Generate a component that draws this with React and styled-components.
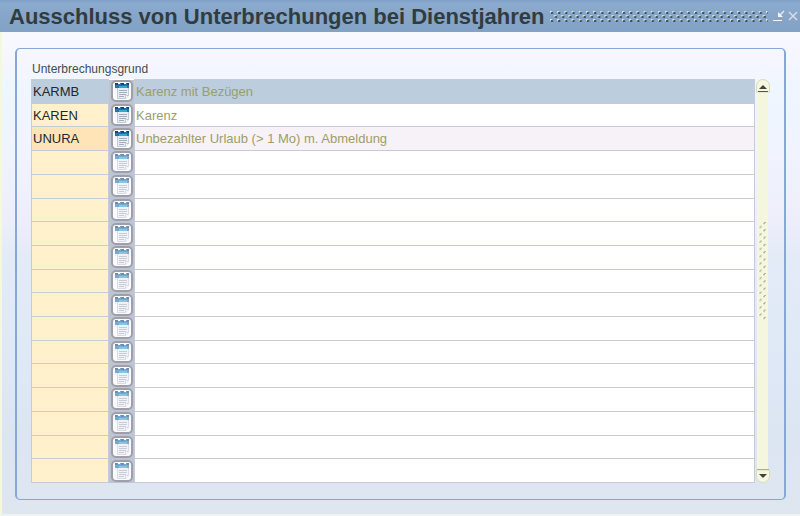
import React, { useState } from "react";
import styled, { createGlobalStyle } from "styled-components";

const GlobalStyle = createGlobalStyle`
    * {
        box-sizing: border-box;
    }
    body {
        margin: 0;
        font-family: "Liberation Sans", Arial, sans-serif;
    }
`;

const Window = styled.div`
    display: flex;
    flex-direction: column;
    min-height: 100vh;
    border-left: 2px solid #f4f8dc;
    border-bottom: 2px solid #eef2f0;
    background: linear-gradient(#f8f8ff 32px, #f6f6ff 60px, #eef6ff 90px, #f0f4ff 150px, #eeeefb 220px, #e2ebf6 260px, #dfe8f6 370px, #dce5f2 430px, #dee6f0);
`;

const TitleBar = styled.header`
    display: flex;
    align-items: center;
    height: 32px;
    margin-left: -2px;
    padding: 0 0 0 9px;
    background: linear-gradient(#809fc5, #8aabcf 4px, #87a5c8 16px, #82a2c6);
`;

const Title = styled.h1`
    margin: 0;
    padding-top: 2px;
    font-size: 22px;
    line-height: 28px;
    color: #303c40;
    white-space: nowrap;
`;

const TitleGrip = styled.svg`
    flex: 1;
    min-width: 0;
    height: 12px;
    margin: 0 4px 0 6px;
`;

const WindowButton = styled.button`
    display: flex;
    width: 14px;
    height: 16px;
    padding: 2px 1px;
    border: 0;
    background: none;
`;

const Panel = styled.main`
    flex: 1;
    display: flex;
    flex-direction: column;
    margin: 16px 14px 14px 13px;
    padding: 10px 14px 16px;
    border: 2px solid #86a8d4;
    border-top-width: 1px;
    border-bottom-width: 1px;
    border-radius: 5px;
`;

const Heading = styled.h2`
    margin: 0;
    padding-left: 1px;
    font-size: 12px;
    font-weight: normal;
    line-height: 20px;
    color: #444c50;
`;

const Content = styled.div`
    flex: 1;
    display: grid;
    grid-template-columns: 1fr 15px;
`;

const Table = styled.table`
    width: 100%;
    height: 100%;
    table-layout: fixed;
    border-collapse: collapse;
    background: #ffffff;
`;

const CodeColumn = styled.col`
    width: 77px;
`;

const ButtonColumn = styled.col`
    width: 26px;
`;

const codeColors = { selected: "#bccddd", striped: "#ffe4b8", plain: "#fff1cc" };
const textColors = { selected: "#bccddd", striped: "#f7f2f7", plain: "#ffffff" };

const CodeCell = styled.td`
    padding: 0;
    border: 1px solid #c6cbd6;
    background: ${({ $tone }) => codeColors[$tone]};
`;

const ButtonCell = styled.td`
    padding: 0 2px;
    background: #bcc5d6;
`;

const TextCell = styled.td`
    padding: 0;
    border: 1px solid #c9cad8;
    background: ${({ $tone }) => textColors[$tone]};
`;

const Field = styled.input`
    display: block;
    width: 100%;
    height: 18px;
    padding: 0 1px;
    border: 0;
    outline: 0;
    background: transparent;
    font-family: inherit;
    font-size: 13px;
    color: ${({ readOnly }) => (readOnly ? "#9a9f68" : "#20282c")};
`;

const LookupButton = styled.button`
    display: flex;
    align-items: center;
    justify-content: center;
    width: 22px;
    height: 22px;
    padding: 0;
    border: 2px solid #a09fa8;
    border-radius: 5px;
    background: #fbfbfd;
`;

const Scrollbar = styled.div`
    display: flex;
    flex-direction: column;
    align-items: center;
`;

const ScrollButton = styled.button`
    display: block;
    width: 14px;
    height: 14px;
    padding: 0;
    border: 0;
    background: none;
`;

const Track = styled.div`
    flex: 1;
    display: flex;
    align-items: center;
    justify-content: center;
    width: 11px;
    padding-bottom: 20px;
    background: #f5f6de;
`;

const entries = [
    { code: "KARMB", text: "Karenz mit Bezügen" },
    { code: "KAREN", text: "Karenz" },
    { code: "UNURA", text: "Unbezahlter Urlaub (> 1 Mo) m. Abmeldung" },
];

while (entries.length < 17) {
    entries.push({ code: "", text: "" });
}

const getTone = (index) => {
    if (index === 0) return "selected";
    return index === 2 ? "striped" : "plain";
};

function ListIcon({ faded }) {
    return (
        <svg width="16" height="18" viewBox="0 0 16 18" opacity={faded ? 0.6 : 1} aria-hidden="true">
            <path d="M1 5H15V14L12 17H3V8H1Z" fill="#e9edf5" />
            <path d="M3.500 6V16.500H11.500L14.500 13.500V6" fill="none" stroke="#c0c9d8" />
            <path d="M11.500 16.500V13.500H14.500" fill="#ffffff" stroke="#c0c9d8" />
            <path d="M1 1H15V6H1Z" fill="#1d75b4" />
            <path d="M1 1H4V3H1ZM7 1H10V3H7ZM13 1H15V3H13Z" fill="#174575" />
            <path d="M4 0H6V2H4ZM10 0H12V2H10Z" fill="#ffffff" />
            <path d="M5 4H13V6H5Z" fill="#36a5d6" />
            <path d="M5 8.500H13M5 10.500H13M5 12.500H12M5 14.500H10" stroke="#a6aebb" />
        </svg>
    );
}

function Grip() {
    return (
        <TitleGrip aria-hidden="true">
            <defs>
                <pattern id="titleDots" width="7.2" height="8" patternUnits="userSpaceOnUse">
                    <path d="M0 1H2V3H0ZM4 5H6V7H4Z" fill="#dce8cf" />
                    <path d="M1 2H3V4H1ZM5 6H7V8H5Z" fill="#344e60" />
                </pattern>
            </defs>
            <rect width="100%" height="12" fill="url(#titleDots)" />
        </TitleGrip>
    );
}

function TrackGrip() {
    return (
        <svg width="9" height="98" aria-hidden="true">
            <defs>
                <pattern id="trackDots" width="9" height="7.3" patternUnits="userSpaceOnUse">
                    <path d="M6 0H8V1H7V2H5V1H6ZM2 4H4V5H3V6H1V5H2Z" fill="#b6b798" />
                    <path d="M4 1H5V2H4ZM0 5H1V6H0Z" fill="#ffffff" />
                </pattern>
            </defs>
            <rect width="9" height="98" fill="url(#trackDots)" />
        </svg>
    );
}

function Row({ index, entry }) {
    const [code, setCode] = useState(entry.code);
    const tone = getTone(index);
    return (
        <tr>
            <CodeCell $tone={tone}>
                <Field
                    aria-label={`Code ${index + 1}`}
                    value={code}
                    onChange={(e) => setCode(e.target.value)}
                />
            </CodeCell>
            <ButtonCell>
                <LookupButton type="button" aria-label={`Auswahl ${index + 1}`}>
                    <ListIcon faded={!entry.code} />
                </LookupButton>
            </ButtonCell>
            <TextCell $tone={tone}>
                <Field aria-label={`Bezeichnung ${index + 1}`} value={entry.text} readOnly />
            </TextCell>
        </tr>
    );
}

function App() {
    return (
        <Window>
            <GlobalStyle />
            <TitleBar>
                <Title>Ausschluss von Unterbrechungen bei Dienstjahren</Title>
                <Grip />
                <WindowButton type="button" aria-label="Minimieren">
                    <svg width="12" height="12" aria-hidden="true">
                        <path d="M0 10.500H9" stroke="#f4f4fa" />
                        <path d="M11 1L7 5" stroke="#e4ebf6" strokeWidth="1.5" />
                        <path d="M5 2V7H10Z" fill="#f0f4fb" />
                    </svg>
                </WindowButton>
                <WindowButton type="button" aria-label="Schließen">
                    <svg width="12" height="12" aria-hidden="true">
                        <path d="M2 2L10 10M10 2L2 10" stroke="#d9dce5" strokeWidth="1.5" />
                    </svg>
                </WindowButton>
            </TitleBar>
            <Panel>
                <Heading id="heading">Unterbrechungsgrund</Heading>
                <Content>
                    <Table aria-labelledby="heading">
                        <colgroup>
                            <CodeColumn />
                            <ButtonColumn />
                            <col />
                        </colgroup>
                        <tbody>
                            {entries.map((entry, index) => (
                                <Row key={index} index={index} entry={entry} />
                            ))}
                        </tbody>
                    </Table>
                    <Scrollbar>
                        <ScrollButton type="button" aria-label="Nach oben">
                            <svg width="14" height="14" aria-hidden="true">
                                <path d="M.5 13V7A6.5 6.5 0 0 1 13.500 7V13Z" fill="#f7f7df" stroke="#d9dcb8" />
                                <path d="M3 10L7 6L11 10Z" fill="#40443c" />
                                <path d="M2 12.500H12" stroke="#55584e" />
                            </svg>
                        </ScrollButton>
                        <Track>
                            <TrackGrip />
                        </Track>
                        <ScrollButton type="button" aria-label="Nach unten">
                            <svg width="14" height="14" aria-hidden="true">
                                <path d="M.5 1V7A6.5 6.5 0 0 0 13.500 7V1Z" fill="#f7f7df" stroke="#d9dcb8" />
                                <path d="M3 5L7 9L11 5Z" fill="#40443c" />
                                <path d="M1 .5H13" stroke="#aeb18f" />
                            </svg>
                        </ScrollButton>
                    </Scrollbar>
                </Content>
            </Panel>
        </Window>
    );
}

export default App;
